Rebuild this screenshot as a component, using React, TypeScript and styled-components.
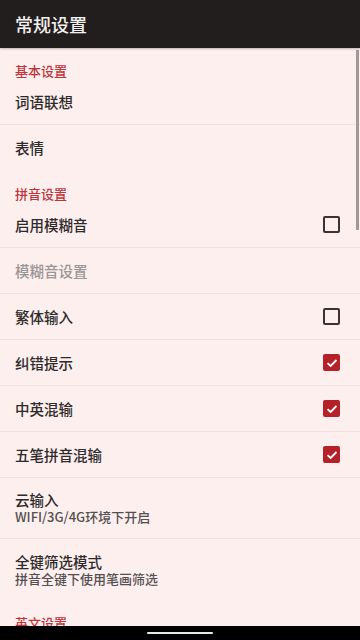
import React from 'react'
import styled, { createGlobalStyle } from 'styled-components'

const GlobalStyle = createGlobalStyle`
  html, body {
    margin: 0;
    padding: 0;
    height: 640px;
    overflow: hidden;
    font-family: "Noto Sans CJK SC", "Noto Sans", sans-serif;
  }
`

const Screen = styled.div`
  width: 360px;
  height: 640px;
  display: flex;
  flex-direction: column;
  background: #fcefee;
  overflow: hidden;
`

const TopBar = styled.header`
  height: 48px;
  flex: none;
  display: flex;
  align-items: center;
  padding: 0 15px;
  background: #231e1e;
  color: #f2f0f0;
  font-size: 18px;
  font-weight: 500;
  box-shadow: 0 1px 2px rgba(0, 0, 0, 0.25);
  position: relative;
  z-index: 1;
`

const List = styled.div`
  flex: 1;
  position: relative;
  overflow: hidden;
  display: flex;
  flex-direction: column;
`

const ScrollThumb = styled.div`
  position: absolute;
  right: 1px;
  top: 2px;
  width: 3px;
  height: 180px;
  background: #a29898;
`

const SectionTitle = styled.div`
  flex: none;
  height: 31px;
  padding: 15px 15px 0;
  box-sizing: border-box;
  color: #c0353c;
  font-size: 13px;
  line-height: 16px;
  font-weight: 500;
`

const Row = styled.div<{ $tall?: boolean; $last?: boolean }>`
  flex: none;
  height: ${(p) => (p.$tall ? '61px' : '46px')};
  box-sizing: border-box;
  display: flex;
  align-items: center;
  justify-content: space-between;
  padding: 0 20px 0 15px;
  border-bottom: ${(p) => (p.$last ? 'none' : '1px solid #f0e1e0')};
`

const TextBlock = styled.div`
  display: flex;
  flex-direction: column;
  gap: 1px;
`

const Label = styled.div<{ $disabled?: boolean }>`
  font-size: 14.5px;
  line-height: 16px;
  font-weight: 500;
  color: ${(p) => (p.$disabled ? '#9b9595' : '#2e2a2a')};
`

const Summary = styled.div`
  font-size: 13px;
  line-height: 15px;
  font-weight: 500;
  color: #555050;
`

const Box = styled.div<{ $checked?: boolean }>`
  width: 17px;
  height: 17px;
  box-sizing: border-box;
  border-radius: 2px;
  display: flex;
  align-items: center;
  justify-content: center;
  background: ${(p) => (p.$checked ? '#b52128' : 'transparent')};
  border: ${(p) => (p.$checked ? 'none' : '2px solid #3b3333')};
`

const NavBar = styled.div`
  height: 14px;
  flex: none;
  background: #000;
  display: flex;
  align-items: center;
  justify-content: center;
`

const HomePill = styled.div`
  width: 66px;
  height: 2px;
  border-radius: 1px;
  background: #e8e8e8;
`

function Checkbox({ checked }: { checked?: boolean }) {
  return (
    <Box $checked={checked}>
      {checked && (
        <svg width="12" height="10" viewBox="0 0 12 10">
          <path d="M1.5 5.2 L4.6 8 L10.5 2" fill="none" stroke="#fff" strokeWidth="1.8" />
        </svg>
      )}
    </Box>
  )
}

type Item = {
  label: string
  summary?: string
  check?: boolean
  checked?: boolean
  disabled?: boolean
  last?: boolean
}

const basic: Item[] = [
  { label: '词语联想' },
  { label: '表情', last: true },
]

const pinyin: Item[] = [
  { label: '启用模糊音', check: true },
  { label: '模糊音设置', disabled: true },
  { label: '繁体输入', check: true },
  { label: '纠错提示', check: true, checked: true },
  { label: '中英混输', check: true, checked: true },
  { label: '五笔拼音混输', check: true, checked: true },
  { label: '云输入', summary: 'WIFI/3G/4G环境下开启' },
  { label: '全键筛选模式', summary: '拼音全键下使用笔画筛选', last: true },
]

function SettingRow({ item }: { item: Item }) {
  return (
    <Row $tall={!!item.summary} $last={item.last}>
      <TextBlock>
        <Label $disabled={item.disabled}>{item.label}</Label>
        {item.summary && <Summary>{item.summary}</Summary>}
      </TextBlock>
      {item.check && <Checkbox checked={item.checked} />}
    </Row>
  )
}

export default function App() {
  return (
    <>
      <GlobalStyle />
      <Screen>
        <TopBar>常规设置</TopBar>
        <List>
          <SectionTitle>基本设置</SectionTitle>
          {basic.map((it) => (
            <SettingRow key={it.label} item={it} />
          ))}
          <SectionTitle>拼音设置</SectionTitle>
          {pinyin.map((it) => (
            <SettingRow key={it.label} item={it} />
          ))}
          <SectionTitle>英文设置</SectionTitle>
          <ScrollThumb />
        </List>
        <NavBar>
          <HomePill />
        </NavBar>
      </Screen>
    </>
  )
}
